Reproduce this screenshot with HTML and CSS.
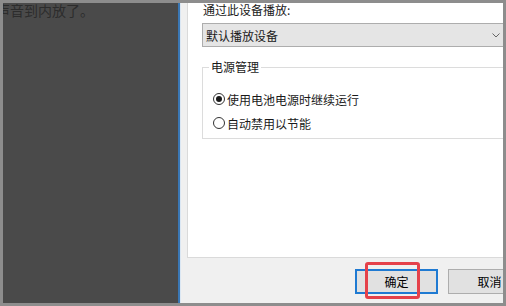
FILE: index.html
```html
<!DOCTYPE html>
<html lang="zh">
<head>
<meta charset="utf-8">
<link rel="stylesheet" href="styles.css">
</head>
<body>
<div class="frame">
  <div class="backdrop"><p class="behind-text">声音到内放了。</p></div>
  <div class="window-edge"></div>
  <div class="dialog">
    <div class="page">
      <div class="label">通过此设备播放:</div>
      <div class="select">
        <span>默认播放设备</span>
        <svg class="chev" width="8" height="5" viewBox="0 0 8 5"><path d="M0.5 0.5 L4 4 L7.5 0.5" fill="none" stroke="#666" stroke-width="1"/></svg>
      </div>
      <fieldset class="group">
        <legend>电源管理</legend>
        <div class="radio"><span class="circle checked"></span>使用电池电源时继续运行</div>
        <div class="radio"><span class="circle"></span>自动禁用以节能</div>
      </fieldset>
    </div>
    <div class="buttons">
      <div class="btn default">确定<span class="highlight"></span></div>
      <div class="btn">取消</div>
    </div>
  </div>
</div>
</body>
</html>
```
FILE: styles.css
```css
html, body {
  margin: 0;
  padding: 0;
}
body {
  font-family: "Noto Sans CJK SC", "Noto Sans", sans-serif;
  font-size: 12px;
  color: #1a1a1a;
}
.frame {
  width: 506px;
  height: 306px;
  box-sizing: border-box;
  padding: 3px 3px 3px 3px;
  background: #8d8d8d;
  display: flex;
  overflow: hidden;
}
.backdrop {
  width: 175px;
  flex: none;
  background: #4a4a4a;
  overflow: hidden;
}
.behind-text {
  margin: 0;
  font-size: 14px;
  line-height: 15px;
  color: #2c2c2c;
  white-space: nowrap;
  text-indent: -7px;
}
.window-edge {
  width: 2px;
  flex: none;
  background: #3a77b4;
  border-right: 1px solid #dbe7f3;
}
.dialog {
  flex: 1;
  min-width: 0;
  background: #f0f0f0;
  overflow: hidden;
  display: flex;
  flex-direction: column;
  padding-left: 6px;
}
.page {
  width: 340px;
  height: 254px;
  flex: none;
  background: #fff;
  border-left: 1px solid #dadada;
  border-bottom: 1px solid #dadada;
  padding-left: 14px;
}
.label {
  line-height: 14px;
  padding-left: 1px;
}
.select {
  margin-top: 6px;
  width: 305px;
  height: 24px;
  box-sizing: border-box;
  border: 1px solid #adadad;
  background: #e5e5e5;
  display: flex;
  align-items: center;
  justify-content: space-between;
  padding: 0 6px 0 3px;
}
.chev {
  display: block;
}
.group {
  margin: 13px 0 0 0;
  width: 305px;
  box-sizing: border-box;
  border: 1px solid #dcdcdc;
  padding: 13px 6px 3px 6px;
  min-inline-size: 0;
}
.group legend {
  padding: 0 2px;
  line-height: 14px;
}
.radio {
  height: 24px;
  display: flex;
  align-items: center;
  padding-left: 4px;
  gap: 2px;
}
.circle {
  width: 12px;
  height: 12px;
  box-sizing: border-box;
  border: 1px solid #333;
  border-radius: 50%;
  display: flex;
  align-items: center;
  justify-content: center;
  flex: none;
}
.circle.checked::after {
  content: "";
  width: 6px;
  height: 6px;
  border-radius: 50%;
  background: #1a1a1a;
}
.buttons {
  display: flex;
  gap: 10px;
  padding: 11px 0 0 168px;
}
.btn {
  width: 83px;
  height: 25px;
  box-sizing: border-box;
  flex: none;
  background: #e1e1e1;
  border: 1px solid #adadad;
  display: flex;
  align-items: center;
  justify-content: center;
  color: #000;
  position: relative;
}
.btn.default {
  border: 2px solid #1f7ad2;
}
.highlight {
  position: absolute;
  left: 8px;
  top: -9px;
  width: 55px;
  height: 37px;
  box-sizing: border-box;
  border: 3px solid #e5414a;
  border-radius: 3px;
}
```
